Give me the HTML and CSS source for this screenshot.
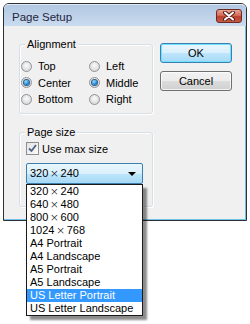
FILE: index.html
```html
<!DOCTYPE html>
<html lang="en">
<head>
    <meta charset="UTF-8">
    <title>Page Setup</title>
    <link rel="stylesheet" href="styles.css">
</head>
<body>
    <div class="window">
        <!-- title bar -->
        <div class="titlebar">
            <span class="title">Page Setup</span>
            <div class="close-btn">
                <svg width="14" height="10" viewBox="0 0 14 10">
                    <path d="M3 1.5 L11 8.5 M11 1.5 L3 8.5" stroke="#5a2018" stroke-width="4" stroke-linecap="round"/>
                    <path d="M3 1.5 L11 8.5 M11 1.5 L3 8.5" stroke="#fff" stroke-width="2" stroke-linecap="round"/>
                </svg>
            </div>
        </div>

        <!-- client area -->
        <div class="client">
            <div class="groups">
                <div class="group align-group">
                    <div class="legend">Alignment</div>
                    <div class="radio-grid">
                        <label class="opt"><span class="radio"></span>Top</label>
                        <label class="opt"><span class="radio"></span>Left</label>
                        <label class="opt"><span class="radio on"></span>Center</label>
                        <label class="opt"><span class="radio on"></span>Middle</label>
                        <label class="opt"><span class="radio"></span>Bottom</label>
                        <label class="opt"><span class="radio"></span>Right</label>
                    </div>
                </div>

                <div class="group size-group">
                    <div class="legend">Page size</div>
                    <label class="check-row">
                        <span class="checkbox">
                            <svg width="11" height="11" viewBox="0 0 11 11">
                                <path d="M2 5.5 L4.5 8 L9 2" fill="none" stroke="#4d6185" stroke-width="1.8"/>
                            </svg>
                        </span>
                        Use max size
                    </label>
                    <div class="combo-wrap">
                        <div class="combo">
                            <span>320<span class="x">×</span>240</span>
                            <span class="arrow"></span>
                        </div>
                        <ul class="dropdown">
                            <li>320<span class="x">×</span>240</li>
                            <li>640<span class="x">×</span>480</li>
                            <li>800<span class="x">×</span>600</li>
                            <li>1024<span class="x">×</span>768</li>
                            <li>A4 Portrait</li>
                            <li>A4 Landscape</li>
                            <li>A5 Portrait</li>
                            <li>A5 Landscape</li>
                            <li class="selected">US Letter Portrait</li>
                            <li>US Letter Landscape</li>
                        </ul>
                    </div>
                </div>
            </div>

            <div class="buttons">
                <div class="btn btn-default">OK</div>
                <div class="btn">Cancel</div>
            </div>
        </div>
    </div>
</body>
</html>
```

FILE: styles.css
```css
* {
    margin: 0;
    padding: 0;
    box-sizing: border-box;
}

html, body {
    min-height: 324px;
}

body {
    font-family: "Liberation Sans", Arial, sans-serif;
    font-size: 11px;
    color: #000;
    background: #fff;
    padding: 3px;
}

.window {
    width: 244px;
    border: 1px solid #2f3033;
    border-radius: 6px 6px 0 0;
}

.titlebar {
    height: 22px;
    display: flex;
    align-items: flex-start;
    justify-content: space-between;
    padding: 5px 4px 0 8px;
    background: linear-gradient(#b2c8e2, #c9dbef);
    border-radius: 5px 5px 0 0;
    border-top: 1px solid #dfe9f5;
}

.title {
    font-size: 11.5px;
    color: #252540;
    line-height: 14px;
}

.close-btn {
    width: 26px;
    height: 14px;
    margin-top: -1px;
    border: 1px solid #6b2a22;
    border-radius: 3px;
    background: linear-gradient(#e7a595 0%, #d46a55 45%, #b8412f 55%, #c75a44 100%);
    display: flex;
    align-items: center;
    justify-content: center;
}

.client {
    background: #f0f0f0;
    height: 194px;
    display: flex;
    align-items: flex-start;
    padding: 17px 12px 0 15px;
    gap: 7px;
    box-shadow: inset -1px -1px 0 #6cc0ea;
}

.groups {
    width: 134px;
    margin-top: 1px;
    display: flex;
    flex-direction: column;
    gap: 18px;
}

.group {
    border: 1px solid #d5dfe5;
    border-radius: 3px;
    box-shadow: inset 1px 1px 0 #fff, 1px 1px 0 #fff;
}

.legend {
    width: fit-content;
    margin: -7px 0 0 5px;
    padding: 0 2px;
    line-height: 13px;
    background: #f0f0f0;
}

.align-group {
    height: 70px;
}

.radio-grid {
    display: grid;
    grid-template-columns: 68px 1fr;
    grid-auto-rows: 16.5px;
    padding: 7px 0 0 1px;
}

.opt {
    display: flex;
    align-items: center;
    gap: 6px;
}

.radio {
    width: 11px;
    height: 11px;
    border-radius: 50%;
    border: 1px solid #8f9294;
    background: radial-gradient(circle at 50% 40%, #fbfbfb, #dcdcdc 70%, #cfcfcf);
    display: flex;
    align-items: center;
    justify-content: center;
}

.radio.on::after {
    content: '';
    width: 5px;
    height: 5px;
    border-radius: 50%;
    background: radial-gradient(circle at 40% 35%, #9fe2ff, #1a7fd0 60%, #0c4f94);
    box-shadow: 0 0 0 1px #2a5f8f;
}

.size-group {
    height: 75px;
}

.check-row {
    display: flex;
    align-items: center;
    gap: 3px;
    margin: 3px 0 0 6px;
    height: 13px;
}

.checkbox {
    width: 13px;
    height: 13px;
    border: 1px solid #8f8f8f;
    background: linear-gradient(135deg, #e4e4e4, #fafafa);
    display: flex;
    align-items: center;
    justify-content: center;
}

.combo-wrap {
    position: relative;
    margin: 8px 0 0 6px;
    width: 117px;
}

.combo {
    height: 21px;
    border: 1px solid #3c7fb1;
    border-radius: 2px;
    background: linear-gradient(#eaf6fd 0%, #d9f0fc 50%, #bee6fd 50%, #a7d9f5 100%);
    display: flex;
    align-items: center;
    justify-content: space-between;
    padding: 0 6px 0 3px;
}

.arrow {
    width: 0;
    height: 0;
    border-left: 4px solid transparent;
    border-right: 4px solid transparent;
    border-top: 4px solid #000;
}

.x {
    font-family: "DejaVu Sans", sans-serif;
    font-size: 11px;
    font-weight: 300;
    margin: 0 1.5px;
}

.dropdown {
    position: absolute;
    top: 21px;
    left: 0;
    width: 117px;
    list-style: none;
    background: #fff;
    border: 1px solid #1a1a1a;
    box-shadow: 4px 4px 2px rgba(0, 0, 0, 0.45);
    z-index: 10;
}

.dropdown li {
    height: 13px;
    line-height: 13px;
    padding-left: 3px;
    white-space: nowrap;
}

.dropdown li.selected {
    background: #3399ff;
    color: #fff;
}

.buttons {
    display: flex;
    flex-direction: column;
    gap: 8px;
}

.btn {
    width: 72px;
    height: 20px;
    border: 1px solid #707070;
    border-radius: 3px;
    background: linear-gradient(#f2f2f2 0%, #ebebeb 50%, #dddddd 50%, #cfcfcf 100%);
    box-shadow: inset 0 0 0 1px rgba(255, 255, 255, 0.7);
    display: flex;
    align-items: center;
    justify-content: center;
}

.btn-default {
    border-color: #3c7fb1;
    background: linear-gradient(#eaf6fd 0%, #d9f0fc 50%, #bee6fd 50%, #a7d9f5 100%);
    box-shadow: inset 0 0 0 1px #6fe0ff;
}
```
